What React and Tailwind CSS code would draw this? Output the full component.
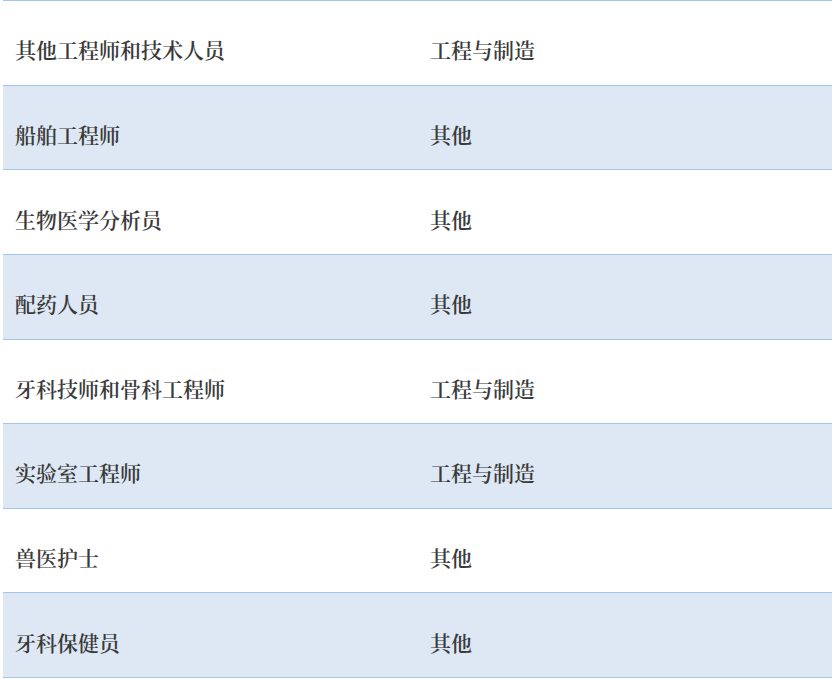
import React from "react";

const rows = [
  ["其他工程师和技术人员", "工程与制造"],
  ["船舶工程师", "其他"],
  ["生物医学分析员", "其他"],
  ["配药人员", "其他"],
  ["牙科技师和骨科工程师", "工程与制造"],
  ["实验室工程师", "工程与制造"],
  ["兽医护士", "其他"],
  ["牙科保健员", "其他"],
];

export default function App() {
  return (
    <div
      className="w-[832px] h-[679px] bg-white overflow-hidden pl-[3px]"
      style={{ fontFamily: '"Noto Serif CJK SC", "Noto Sans CJK SC", serif' }}
    >
      <div className="flex flex-col border-b border-[#a3c6e8]">
        {rows.map((r, i) => (
          <div
            key={i}
            className={
              "flex h-[84.625px] border-t border-[#a3c6e8] items-center pt-[14px] text-[21px] font-semibold text-[#3a3a3a] leading-none " +
              (i % 2 === 1 ? "bg-[#dde8f4]" : "bg-white")
            }
          >
            <div className="w-[416px] pl-[12px]">{r[0]}</div>
            <div className="flex-1 pl-[11px]">{r[1]}</div>
          </div>
        ))}
      </div>
    </div>
  );
}
